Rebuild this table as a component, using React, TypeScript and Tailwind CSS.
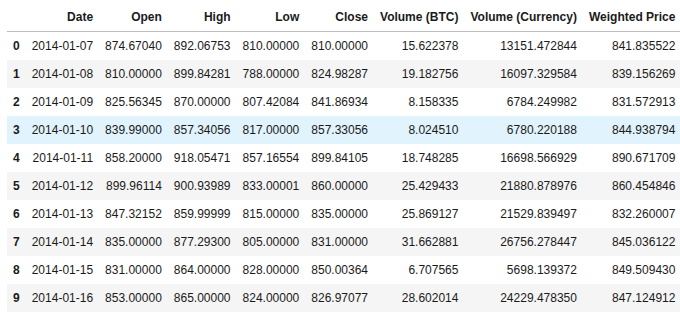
const columns = ["Date", "Open", "High", "Low", "Close", "Volume (BTC)", "Volume (Currency)", "Weighted Price"]

const rows = [
  ["2014-01-07", "874.67040", "892.06753", "810.00000", "810.00000", "15.622378", "13151.472844", "841.835522"],
  ["2014-01-08", "810.00000", "899.84281", "788.00000", "824.98287", "19.182756", "16097.329584", "839.156269"],
  ["2014-01-09", "825.56345", "870.00000", "807.42084", "841.86934", "8.158335", "6784.249982", "831.572913"],
  ["2014-01-10", "839.99000", "857.34056", "817.00000", "857.33056", "8.024510", "6780.220188", "844.938794"],
  ["2014-01-11", "858.20000", "918.05471", "857.16554", "899.84105", "18.748285", "16698.566929", "890.671709"],
  ["2014-01-12", "899.96114", "900.93989", "833.00001", "860.00000", "25.429433", "21880.878976", "860.454846"],
  ["2014-01-13", "847.32152", "859.99999", "815.00000", "835.00000", "25.869127", "21529.839497", "832.260007"],
  ["2014-01-14", "835.00000", "877.29300", "805.00000", "831.00000", "31.662881", "26756.278447", "845.036122"],
  ["2014-01-15", "831.00000", "864.00000", "828.00000", "850.00364", "6.707565", "5698.139372", "849.509430"],
  ["2014-01-16", "853.00000", "865.00000", "824.00000", "826.97077", "28.602014", "24229.478350", "847.124912"],
]

export default function App() {
  return (
    <div className="w-[680px] h-[320px] bg-white overflow-hidden font-['Liberation_Sans',Arial,sans-serif] text-[12px] leading-4 text-[#1a1a1a]">
      <table className="ml-[7px] border-collapse">
        <thead>
          <tr className="border-b border-[#bdbdbd]">
            <th className="px-[6px] pt-[9px] pb-[6px]"></th>
            {columns.map((c) => (
              <th key={c} className="px-[6px] pt-[9px] pb-[6px] text-right font-bold whitespace-nowrap">
                {c}
              </th>
            ))}
          </tr>
        </thead>
        <tbody>
          {rows.map((r, i) => (
            <tr key={i} className={i === 3 ? "bg-[#e1f3fc]" : i % 2 === 1 ? "bg-[#f5f5f5]" : "bg-white"}>
              <th className="px-[6px] py-[6px] text-right font-bold">{i}</th>
              {r.map((v, j) => (
                <td key={j} className="px-[6px] py-[6px] text-right whitespace-nowrap">
                  {v}
                </td>
              ))}
            </tr>
          ))}
        </tbody>
      </table>
    </div>
  )
}
